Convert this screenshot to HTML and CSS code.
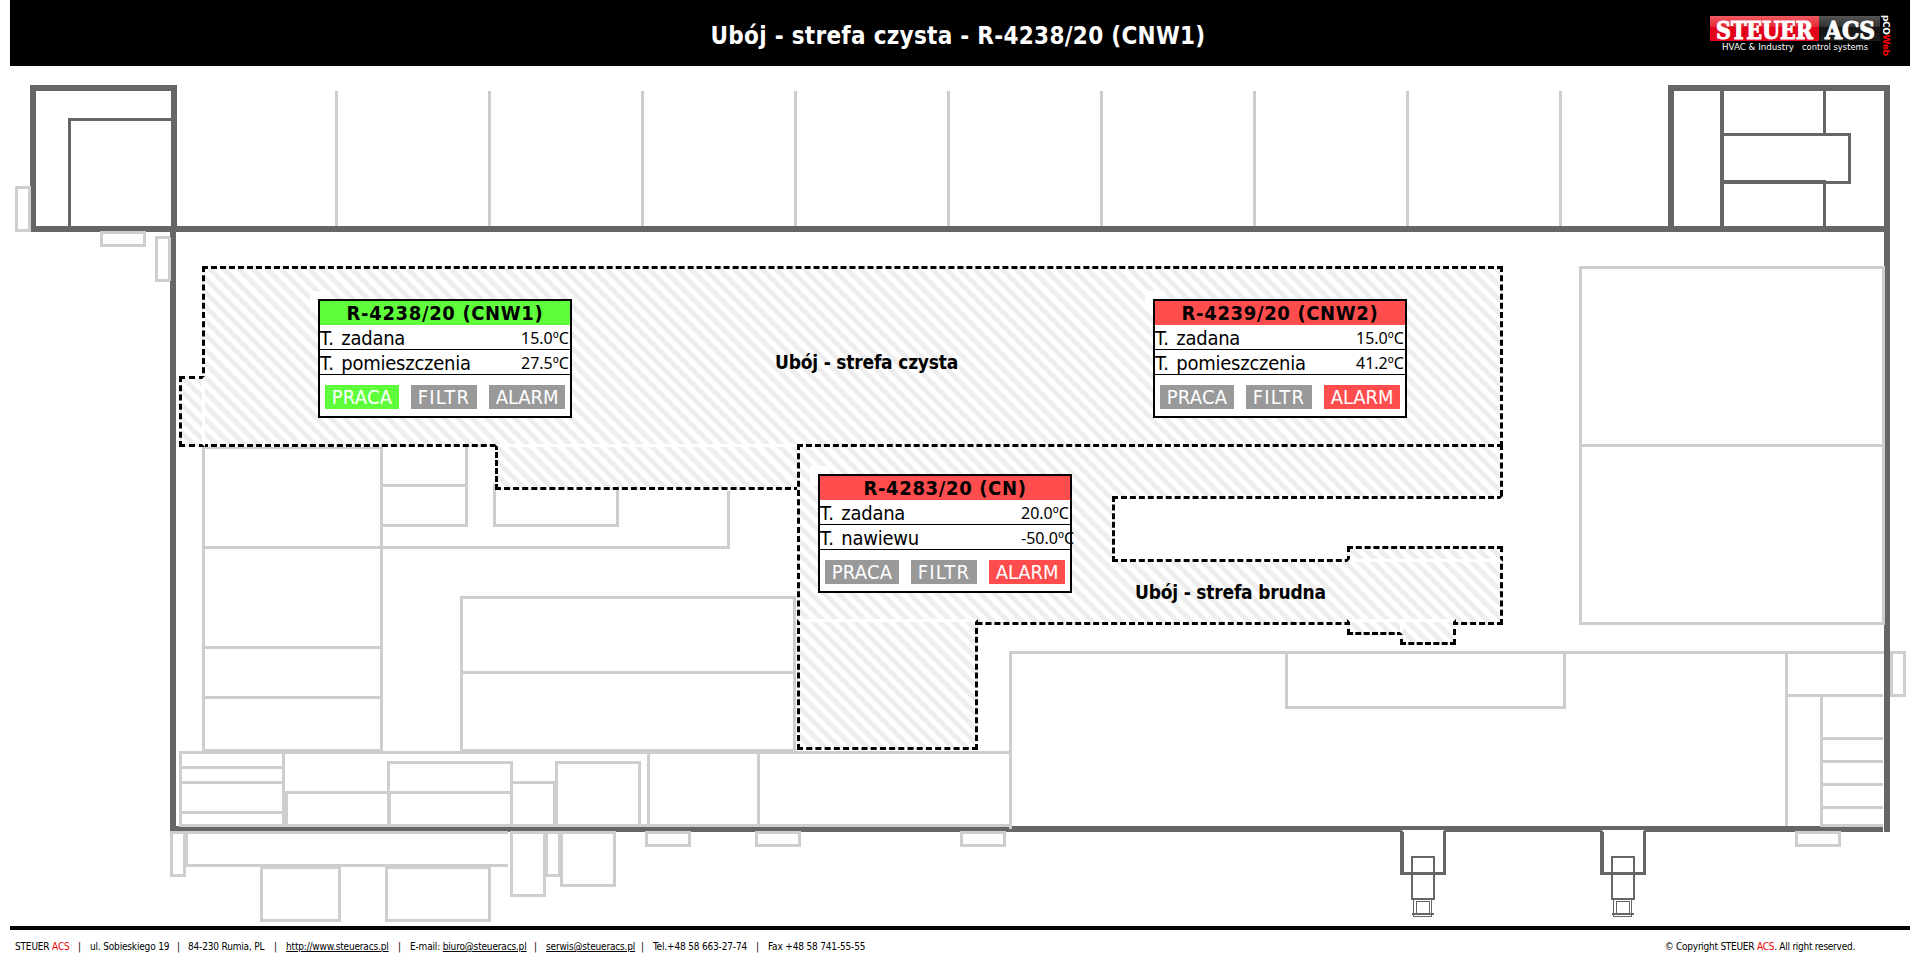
FILE: index.html
```html
<!DOCTYPE html>
<html lang="pl">
<head>
<meta charset="utf-8">
<title>Ubój - strefa czysta - R-4238/20 (CNW1)</title>
<link rel="stylesheet" href="styles.css">
</head>
<body>
<header class="topbar">
  <h1 class="topbar-title">Ubój - strefa czysta - R-4238/20 (CNW1)</h1>
  <svg class="logo" width="190" height="45" viewBox="0 0 190 45">
    <defs>
      <linearGradient id="red" x1="0" y1="0" x2="0" y2="1">
        <stop offset="0" stop-color="#ef5a62"/><stop offset=".42" stop-color="#e32a36"/><stop offset=".46" stop-color="#e2001a"/><stop offset="1" stop-color="#e2001a"/>
      </linearGradient>
      <linearGradient id="dark" x1="0" y1="0" x2="0" y2="1">
        <stop offset="0" stop-color="#555"/><stop offset=".42" stop-color="#333"/><stop offset=".46" stop-color="#151515"/><stop offset="1" stop-color="#1c1c1c"/>
      </linearGradient>
    </defs>
    <rect x="20" y="6" width="109" height="25" fill="url(#red)"/>
    <rect x="129" y="6" width="61" height="25" fill="url(#dark)"/>
    <text class="logo-name" x="26" y="28.500" textLength="97" lengthAdjust="spacingAndGlyphs">STEUER</text>
    <text class="logo-name" x="135" y="28.500" textLength="50" lengthAdjust="spacingAndGlyphs">ACS</text>
    <text class="logo-tag" x="32" y="40" textLength="72" lengthAdjust="spacingAndGlyphs">HVAC &amp; Industry</text>
    <text class="logo-tag" x="112" y="40" textLength="66" lengthAdjust="spacingAndGlyphs">control systems</text>
  </svg>
  <span class="logo-side">pCO<b>Web</b></span>
</header>

<main class="plan">
  <svg class="walls" width="1920" height="860" viewBox="0 66 1920 860" shape-rendering="crispEdges">
    <g class="dark">
      <path class="w6" d="M33 232V88H174V229M31 229H1887M173 229V832M170 829H1883M1671 229V88H1887V832"/>
      <path class="w3" d="M69.500 226V119.500H171M1824.500 91V134.500M1722 134.500H1849.500V182.500H1722M1824.500 182V226"/>
      <path class="w4" d="M1722 91V226M1722 182H1826"/>
    </g>
    <g class="light">
      <path d="M336.500 91V226M489.500 91V226M642.500 91V226M795.500 91V226M948.500 91V226M1101.500 91V226M1254.500 91V226M1407.500 91V226M1560.500 91V226"/>
      <path d="M16.500 187.500H29.500V230.500H16.500ZM101.500 232.500H144.500V245.500H101.500ZM170 237.500H156.500V280.500H170M169.500 237V281"/>
      <path d="M1580.500 267.500H1883.500V623.500H1580.500ZM1580 445.500H1884"/>
      <path d="M203.500 447.500H381.500V750.500H203.500ZM382 485.500H466.500M466.500 446V525.500H382M203 547.500H728.500V491M203 647.500H382M203 697.500H382M494.500 485.500H617.500V525.500H494.500Z"/>
      <path d="M461.500 597.500H794.500V750.500H461.500ZM461 672.500H795"/>
      <path d="M1010.500 829V652.500H1884M1010 752.500H180.500V825.500H1010M283.500 752V826M180 767.500H284M180 782.500H284M180 812.500H284"/>
      <path d="M286.500 826V792.500H388.500V826M388.500 792.500V762.500H511.500V792.500H389.500V826M511.500 792V826M511 782.500H554.500V826M556.500 826V762.500H639.500V826M648.500 752V826M758.500 752V826"/>
      <path d="M1286.500 653V707.500H1564.500V653M1786.500 653V826M1786 695.500H1883M1883 825.500H1821.500V695M1821 738.500H1883M1821 761.500H1883M1821 784.500H1883M1821 807.500H1883"/>
      <path d="M1891.500 652.500H1904.500V695.500H1891.500ZM1796.500 832.500H1839.500V845.500H1796.500ZM646.500 832.500H689.500V845.500H646.500ZM756.500 832.500H799.500V845.500H756.500ZM961.500 832.500H1004.500V845.500H961.500Z"/>
      <path d="M171.500 832.500H184.500V875.500H171.500ZM508 832.500H186.500V865.500H508M261.500 867.500H339.500V920.500H261.500ZM386.500 867.500H489.500V920.500H386.500ZM511.500 832.500H544.500V895.500H511.500ZM546.500 832.500H559.500V875.500H546.500ZM561.500 832.500H614.500V885.500H561.500Z"/>
    </g>
    <defs>
      <g id="dock">
        <path fill="#fff" d="M0 829H46L43 832V872H3V832Z"/>
        <path class="w3" d="M1.500 831V873.500H44.500V831"/>
        <path class="w2" d="M12 857H34V899H12Z"/>
        <path class="w1" d="M13.500 900V916.500H31.500V900M16.500 913V901.500H29.500V913"/>
        <path class="w2" d="M12 914H34"/>
      </g>
    </defs>
    <g class="dark"><use href="#dock" x="1400"/><use href="#dock" x="1600"/></g>
  </svg>

  <div class="zone zone-clean"></div>
  <div class="zone zone-clean-west"></div>
  <div class="zone zone-clean-south"></div>
  <div class="zone zone-dirty"></div>
  <div class="zone zone-gap"></div>
  <div class="zone zone-dirty-east"></div>
  <div class="zone zone-dirty-south"></div>
  <div class="zone zone-step-right"></div>
  <div class="zone zone-step-left"></div>

  <div class="label label-clean">Ubój - strefa czysta</div>
  <div class="label label-dirty">Ubój - strefa brudna</div>

  <section class="unit unit-cnw1">
    <h2 class="unit-name on">R-4238/20 (CNW1)</h2>
    <div class="row"><span>T. zadana</span><span class="value">15.0ºC</span></div>
    <div class="row"><span>T. pomieszczenia</span><span class="value">27.5ºC</span></div>
    <div class="flags"><span class="flag praca on">PRACA</span><span class="flag filtr">FILTR</span><span class="flag alarm">ALARM</span></div>
  </section>
  <section class="unit unit-cnw2">
    <h2 class="unit-name fault">R-4239/20 (CNW2)</h2>
    <div class="row"><span>T. zadana</span><span class="value">15.0ºC</span></div>
    <div class="row"><span>T. pomieszczenia</span><span class="value">41.2ºC</span></div>
    <div class="flags"><span class="flag praca">PRACA</span><span class="flag filtr">FILTR</span><span class="flag alarm fault">ALARM</span></div>
  </section>
  <section class="unit unit-cn">
    <h2 class="unit-name fault">R-4283/20 (CN)</h2>
    <div class="row"><span>T. zadana</span><span class="value">20.0ºC</span></div>
    <div class="row"><span>T. nawiewu</span><span class="value">-50.0ºC</span></div>
    <div class="flags"><span class="flag praca">PRACA</span><span class="flag filtr">FILTR</span><span class="flag alarm fault">ALARM</span></div>
  </section>
</main>

<footer class="footer">
  <div class="contact">
    <span>STEUER <em>ACS</em></span><i>|</i>
    <span>ul. Sobieskiego 19</span><i>|</i>
    <span>84-230 Rumia, PL</span><i>|</i>
    <span><a>http://www.steueracs.pl</a></span><i>|</i>
    <span>E-mail: <a>biuro@steueracs.pl</a></span><i>|</i>
    <span><a>serwis@steueracs.pl</a></span><i>|</i>
    <span>Tel.+48 58 663-27-74</span><i>|</i>
    <span>Fax +48 58 741-55-55</span>
  </div>
  <span class="copyright">© Copyright STEUER <em>ACS</em>. All right reserved.</span>
</footer>
</body>
</html>
```
FILE: styles.css
```css
* { box-sizing: border-box; }
body {
  margin: 0;
  height: 960px;
  overflow: hidden;
  background: #fff;
  color: #000;
  font-family: "DejaVu Sans Condensed", "DejaVu Sans", sans-serif;
}

/* Header */
.topbar {
  display: flex;
  justify-content: center;
  position: relative;
  height: 66px;
  margin: 0 10px;
  background: #000;
  color: #fff;
}
.topbar-title {
  margin: 0;
  padding-right: 4px;
  font-size: 24px;
  line-height: 72px;
  letter-spacing: .28px;
  white-space: pre;
}
.logo { position: absolute; left: 1680px; top: 10px; }
.logo-name { font: bold 25px "DejaVu Serif Condensed", "DejaVu Serif", serif; fill: #fff; stroke: #fff; stroke-width: 1px; }
.logo-tag { font: 8px "DejaVu Sans", sans-serif; fill: #fff; }
.logo-side {
  position: absolute;
  left: 1872px;
  top: 15px;
  writing-mode: vertical-rl;
  font: bold 9px/8px "DejaVu Sans", sans-serif;
  letter-spacing: -.4px;
}
.logo-side b { color: #f00; }

/* Floor plan */
.plan { position: relative; height: 860px; }
.walls { display: block; fill: none; }
.dark { stroke: #666; }
.light { stroke: #cecece; stroke-width: 3px; }
.dark path[fill] { stroke: none; }
.w1 { stroke-width: 1px; }
.w2 { stroke-width: 2px; }
.w3 { stroke-width: 3px; }
.w4 { stroke-width: 4px; }
.w6 { stroke-width: 6px; }

.zone {
  position: absolute;
  border: 3px dashed #000;
  background: repeating-linear-gradient(45deg, #fff, #fff 5px, #eee 5px, #eee 10px);
}
.zone-clean { left: 202px; top: 200px; width: 1301px; height: 181px; }
.zone-clean-west { left: 179px; top: 310px; width: 26px; height: 71px; border-right: 3px solid #fff; }
.zone-clean-south { left: 495px; top: 378px; width: 305px; height: 46px; border-top: 3px solid #fff; }
.zone-dirty { left: 797px; top: 378px; width: 706px; height: 181px; }
.zone-gap { left: 1112px; top: 430px; width: 391px; height: 66px; border-right: 3px solid #fff; background: #fff; }
.zone-dirty-east { left: 1347px; top: 480px; width: 156px; height: 16px; border-bottom: 3px solid #fff; }
.zone-dirty-south { left: 797px; top: 553px; width: 181px; height: 131px; border-top: 3px solid #fff; }
.zone-step-right { left: 1400px; top: 553px; width: 56px; height: 26px; border-top: 3px solid #fff; }
.zone-step-left { left: 1347px; top: 553px; width: 56px; height: 16px; border-top: 3px solid #fff; border-right: 3px solid #fff; }

.label {
  position: absolute;
  font-size: 19px;
  font-weight: bold;
  line-height: 24px;
  letter-spacing: -.2px;
  white-space: nowrap;
}
.label-clean { left: 775px; top: 284px; }
.label-dirty { left: 1135px; top: 514px; }

/* Unit cards */
.unit {
  position: absolute;
  width: 254px;
  height: 119px;
  border: 2px solid #000;
  background: #fff;
}
.unit::before {
  content: "";
  position: absolute;
  left: -10px;
  top: -10px;
  width: 20px;
  height: 20px;
  background: #fff;
  clip-path: polygon(0 0, 20px 0, 20px 8px, 8px 8px, 8px 20px, 0 20px);
}
.unit-cnw1 { left: 318px; top: 233px; }
.unit-cnw2 { left: 1153px; top: 233px; }
.unit-cn { left: 818px; top: 408px; }
.unit-name {
  height: 24px;
  margin: 0;
  font-size: 20px;
  line-height: 25px;
  letter-spacing: .65px;
  text-align: center;
}
.row {
  display: flex;
  justify-content: space-between;
  height: 25px;
  border-bottom: 1px solid #000;
  font-size: 20px;
  line-height: 26px;
  letter-spacing: -.25px;
  word-spacing: 2px;
}
.value {
  width: 49px;
  font-family: "Noto Sans", sans-serif;
  font-size: 16px;
  line-height: 27px;
  letter-spacing: 0;
  white-space: nowrap;
}
.flags { display: flex; gap: 12px; padding: 10px 5px; }
.flag {
  height: 24px;
  background: #999;
  color: #fff;
  font-size: 20px;
  line-height: 25px;
  text-align: center;
}
.praca { width: 74px; letter-spacing: .2px; }
.filtr { width: 66px; letter-spacing: 1.2px; }
.alarm { width: 76px; letter-spacing: -.1px; }
.on { background: #5fff3c; }
.fault { background: #ff4d4d; }

/* Footer */
.footer {
  display: flex;
  justify-content: space-between;
  height: 34px;
  margin: 0 10px;
  padding: 0 55px 0 5px;
  border-top: 4px solid #000;
  font-size: 10px;
  line-height: 33px;
  white-space: nowrap;
}
.contact {
  display: grid;
  grid-template-columns: 63px 12px 87px 11px 86px 12px 112px 12px 124px 12px 95px 12px 103px 12px 100px;
  letter-spacing: -.17px;
}
.contact i { font-style: normal; }
.footer a { text-decoration: underline; }
.footer em { font-style: normal; color: #e00; }
.copyright { letter-spacing: -.25px; }
```
